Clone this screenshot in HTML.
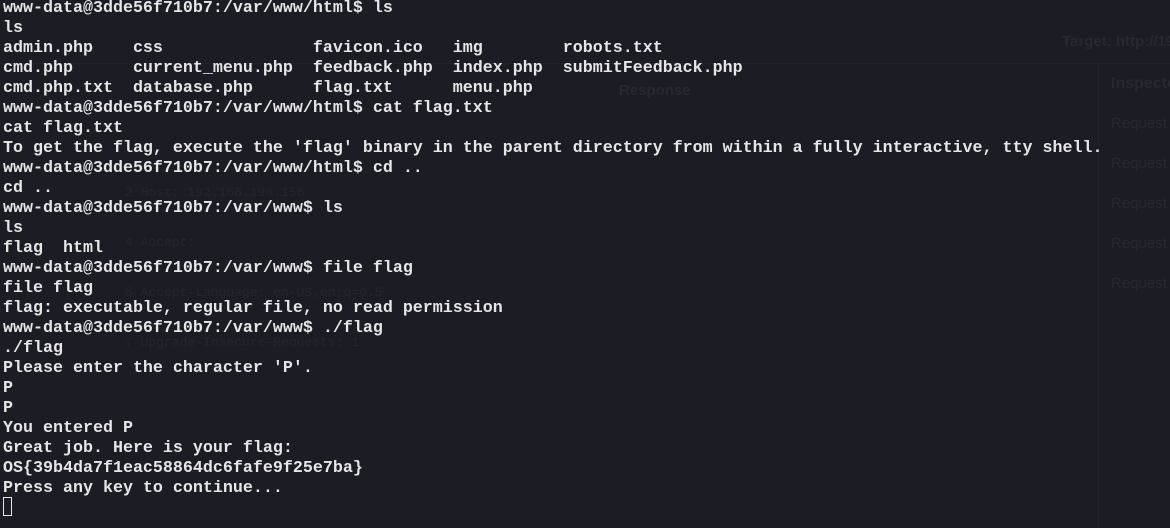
<!DOCTYPE html>
<html><head><meta charset="utf-8"><style>
html,body{margin:0;padding:0;width:1170px;height:528px;overflow:hidden;background:#1b1d24;}
.g{position:absolute;color:#262932;font-family:"Liberation Sans",sans-serif;font-size:15px;white-space:nowrap;}
.gm{position:absolute;color:#23262e;font-family:"Liberation Mono",monospace;font-size:13px;white-space:nowrap;}
pre{position:absolute;left:3px;top:-1px;margin:0;font-family:"Liberation Mono","DejaVu Sans Mono",monospace;font-size:16.67px;line-height:20px;color:#e6e6e6;font-weight:bold;letter-spacing:0;}
.cur{position:absolute;left:3px;top:497px;width:9px;height:19px;border:1px solid #e6e6e6;box-sizing:border-box;}
.vl{position:absolute;left:1098px;top:63px;width:1px;height:465px;background:#20232a;}
.hl{position:absolute;left:0;top:63px;width:1170px;height:1px;background:#20232a;}
</style></head><body>
<div class="hl"></div><div class="vl"></div>
<div class="g" style="left:1062px;top:33px;font-weight:bold">Target: http://192</div>
<div class="g" style="left:1111px;top:75px;font-weight:bold;font-size:16px">Inspector</div>
<div class="g" style="left:1111px;top:115px">Request A</div>
<div class="g" style="left:1111px;top:155px">Request Q</div>
<div class="g" style="left:1111px;top:195px">Request B</div>
<div class="g" style="left:1111px;top:235px">Request C</div>
<div class="g" style="left:1111px;top:275px">Request H</div>
<div class="g" style="left:619px;top:82px;font-weight:bold">Response</div>
<div class="gm" style="left:125px;top:185px">2 Host: 192.168.190.156</div>
<div class="gm" style="left:125px;top:235px">4 Accept:</div>
<div class="gm" style="left:125px;top:285px">5 Accept-Language: en-US,en;q=0.5</div>
<div class="gm" style="left:125px;top:335px">7 Upgrade-Insecure-Requests: 1</div>
<pre>www-data@3dde56f710b7:/var/www/html$ ls
ls
admin.php    css               favicon.ico   img        robots.txt
cmd.php      current_menu.php  feedback.php  index.php  submitFeedback.php
cmd.php.txt  database.php      flag.txt      menu.php
www-data@3dde56f710b7:/var/www/html$ cat flag.txt
cat flag.txt
To get the flag, execute the 'flag' binary in the parent directory from within a fully interactive, tty shell.
www-data@3dde56f710b7:/var/www/html$ cd ..
cd ..
www-data@3dde56f710b7:/var/www$ ls
ls
flag  html
www-data@3dde56f710b7:/var/www$ file flag
file flag
flag: executable, regular file, no read permission
www-data@3dde56f710b7:/var/www$ ./flag
./flag
Please enter the character 'P'.
P
P
You entered P
Great job. Here is your flag:
OS{39b4da7f1eac58864dc6fafe9f25e7ba}
Press any key to continue...</pre>
<div class="cur"></div>
</body></html>
